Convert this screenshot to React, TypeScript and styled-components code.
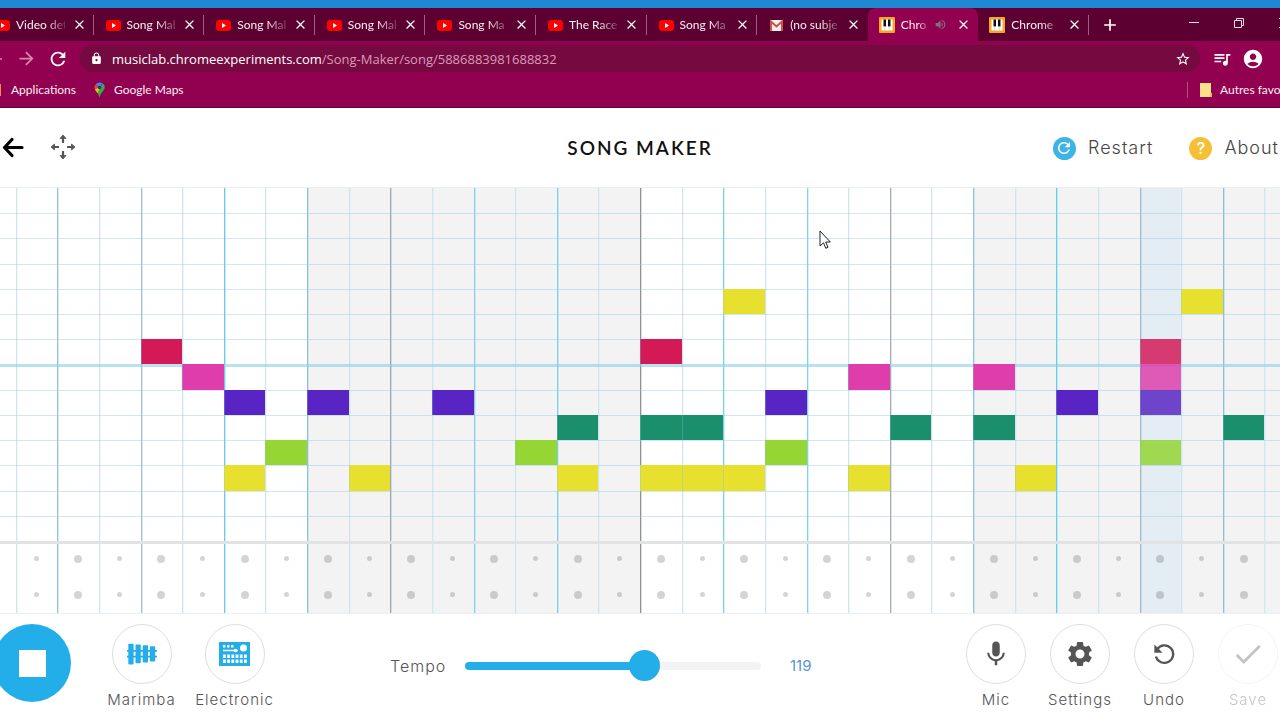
import React, { useState } from 'react';
import styled, { createGlobalStyle } from 'styled-components';
import {
  MdAccountCircle,
  MdAdd,
  MdArrowForward,
  MdCheck,
  MdClose,
  MdLock,
  MdMic,
  MdQueueMusic,
  MdRefresh,
  MdSettings,
  MdStarBorder,
  MdVolumeUp,
} from 'react-icons/md';

const uiFont = 'Lato, "Open Sans", sans-serif';
const urlFont = '"Open Sans", "Noto Sans", sans-serif';
const appFont = 'Inter, "Open Sans", sans-serif';
const accent = '#24aee9';

const GlobalStyle = createGlobalStyle`
  *, *::before, *::after { box-sizing: border-box; }
  body { margin: 0; background: #fff; overflow-x: hidden; }
  button { padding: 0; border: 0; background: none; font: inherit; color: inherit; cursor: pointer; }
  a { color: inherit; text-decoration: none; }
  svg { display: block; flex: none; }
`;

const Page = styled.div`
  position: relative;
  display: flex;
  flex-direction: column;
  min-height: 100vh;
  overflow: hidden;
`;

/* ---------- browser frame ---------- */

const Browser = styled.div`
  font-family: ${uiFont};
  color: #fbeff5;
  background: #920050;
  border-top: 8px solid #1f88d3;
  border-bottom: 1px solid #5d0636;
`;

const TabStrip = styled.div`
  display: flex;
  align-items: center;
  height: 33px;
  background: #5b0030;
`;

const Tabs = styled.div`
  display: flex;
  flex: 0 0 1106px;
  height: 33px;
  margin-left: -17px;
`;

const Tab = styled.div<{ $active?: boolean; $line?: boolean }>`
  position: relative;
  display: flex;
  flex: 1;
  align-items: center;
  gap: 6px;
  padding-left: 11px;
  font-size: 12px;
  line-height: 16px;
  border-radius: 8px 8px 0 0;
  background: ${(p) => (p.$active ? '#920050' : 'transparent')};
  &::after {
    content: '';
    position: absolute;
    right: 0;
    top: 7px;
    width: 1px;
    height: 20px;
    background: ${(p) => (p.$line ? '#9c6080' : 'transparent')};
  }
`;

const TabTitle = styled.span<{ $short?: boolean }>`
  width: ${(p) => (p.$short ? '27px' : '49px')};
  white-space: nowrap;
  mask-image: linear-gradient(to right, #000 60%, rgba(0, 0, 0, 0.2) 100%);
`;

const TabSound = styled.span`
  width: 16px;
  color: #84707a;
`;

const TabClose = styled.button`
  display: grid;
  place-items: center;
  width: 16px;
  height: 16px;
  color: #fff;
`;

const NewTab = styled.button`
  display: grid;
  place-items: center;
  width: 28px;
  height: 28px;
  margin-left: 7px;
  color: #fff;
`;

const WindowControls = styled.div`
  display: flex;
  align-items: center;
  gap: 33px;
  height: 28px;
  margin: 0 -10px 4px auto;
`;

const ControlButton = styled.button`
  display: grid;
  place-items: center;
  width: 12px;
  height: 12px;
`;

const Toolbar = styled.div`
  display: flex;
  align-items: center;
  height: 35px;
`;

const NavGroup = styled.div`
  display: flex;
  align-items: center;
  gap: 10px;
  width: 80px;
  margin-left: -14px;
  margin-right: 14px;
`;

const NavButton = styled.button<{ $dim?: boolean }>`
  color: ${(p) => (p.$dim ? '#d287ae' : '#fff')};
`;

const AddressBar = styled.div`
  display: flex;
  flex: 1;
  align-items: center;
  gap: 9px;
  height: 27px;
  padding: 0 9px 0 10px;
  border-radius: 14px;
  background: #740a40;
`;

const Address = styled.span`
  flex: 1;
  font-family: ${urlFont};
  font-size: 13px;
  line-height: 18px;
  color: #d99bbb;
  white-space: nowrap;
`;

const Host = styled.span`
  color: #fff;
`;

const ToolbarEnd = styled.div`
  display: flex;
  align-items: center;
  gap: 10px;
  margin: 0 16px 0 12px;
  color: #fff;
`;

const Bookmarks = styled.div`
  display: flex;
  align-items: center;
  height: 31px;
  padding-bottom: 4px;
  font-size: 12px;
  line-height: 16px;
`;

const AppsMark = styled.span`
  width: 1px;
  height: 12px;
  margin-right: 10px;
  background: #ef8a5a;
`;

const Bookmark = styled.a`
  display: flex;
  align-items: center;
  gap: 8px;
  margin-right: 17px;
  white-space: nowrap;
`;

const OtherBookmarks = styled.div`
  display: flex;
  width: 93px;
  margin-left: auto;
  padding-left: 12px;
  border-left: 1px solid #b0527f;
`;

/* ---------- song maker header ---------- */

const Header = styled.header`
  display: grid;
  grid-template-columns: 1fr auto 1fr;
  align-items: center;
  height: 80px;
  font-family: ${appFont};
  font-weight: 300;
  color: #444;
`;

const HeaderSide = styled.div<{ $end?: boolean }>`
  display: flex;
  align-items: center;
  gap: ${(p) => (p.$end ? '36px' : '26px')};
  justify-content: ${(p) => (p.$end ? 'flex-end' : 'flex-start')};
  padding: ${(p) => (p.$end ? '0 1px 0 0' : '0 0 0 2px')};
`;

const Title = styled.h1`
  margin: 0;
  font-family: Lato, sans-serif;
  font-size: 19px;
  line-height: 28px;
  font-weight: 600;
  letter-spacing: 2px;
  color: #111;
`;

const HeaderButton = styled.button`
  display: flex;
  align-items: center;
  gap: 12px;
  font-size: 18px;
  line-height: 24px;
  letter-spacing: 1px;
`;

const Disc = styled.span<{ $color: string }>`
  display: grid;
  place-items: center;
  width: 23px;
  height: 23px;
  border-radius: 50%;
  background: ${(p) => p.$color};
  color: #fff;
  font-size: 16px;
  line-height: 23px;
  font-weight: 500;
  letter-spacing: 0;
`;

/* ---------- sequencer ---------- */

const Sequencer = styled.main`
  display: grid;
  flex: 1;
  grid-template-columns: repeat(32, 1fr);
  grid-template-rows: repeat(14, minmax(20px, 1fr)) 36px 36px;
  margin: 0 -26px;
  box-shadow: 0 0 0 1px #ebeff1;
`;

const Column = styled.div<{ $shaded: boolean; $line: string; $playing: boolean }>`
  grid-row: 1 / -1;
  border-left: 1px solid ${(p) => p.$line};
  box-shadow: inset 1px 0 0 ${(p) => p.$line}55;
  background: ${(p) => (p.$playing ? '#e4edf4' : p.$shaded ? '#f3f3f3' : '#fff')};
`;

const RowLine = styled.div<{ $octave?: boolean }>`
  grid-column: 1 / -1;
  align-self: end;
  height: ${(p) => (p.$octave ? '3px' : '1px')};
  margin-bottom: ${(p) => (p.$octave ? '-3px' : '-1px')};
  background: ${(p) => (p.$octave ? 'rgba(140, 205, 235, 0.6)' : 'rgba(150, 205, 228, 0.45)')};
`;

const Divider = styled.div`
  grid-column: 1 / -1;
  grid-row: 15;
  height: 3px;
  background: #e1e2e3;
`;

const Note = styled.div<{ $color: string; $playing: boolean }>`
  border-left: 1px solid rgba(130, 200, 220, 0.35);
  background: ${(p) => p.$color};
  opacity: ${(p) => (p.$playing ? 0.84 : 1)};
`;

const Beat = styled.div<{ $strong: boolean }>`
  place-self: center;
  width: ${(p) => (p.$strong ? '8px' : '5px')};
  height: ${(p) => (p.$strong ? '8px' : '5px')};
  border-radius: 50%;
  background: rgba(0, 0, 0, 0.17);
`;

/* ---------- bottom controls ---------- */

const Footer = styled.footer`
  display: flex;
  align-items: flex-start;
  height: 107px;
  padding-top: 11px;
  font-family: ${appFont};
  font-weight: 300;
  color: #555;
`;

const StopButton = styled.button`
  display: grid;
  place-items: center;
  flex: none;
  width: 78px;
  height: 78px;
  margin: 0 24px 0 -7px;
  border-radius: 50%;
  background: ${accent};
`;

const StopSquare = styled.span`
  width: 27px;
  height: 27px;
  background: #fff;
`;

const ToolGroup = styled.div<{ $end?: boolean }>`
  display: flex;
  margin-right: ${(p) => (p.$end ? '-10px' : '0')};
`;

const Tool = styled.button<{ $wide?: boolean; $faded?: boolean }>`
  display: flex;
  flex-direction: column;
  align-items: center;
  gap: 6px;
  width: ${(p) => (p.$wide ? '93px' : '84px')};
  font-size: 15px;
  line-height: 20px;
  letter-spacing: 1px;
  opacity: ${(p) => (p.$faded ? 0.35 : 1)};
`;

const ToolCircle = styled.span`
  display: grid;
  place-items: center;
  width: 60px;
  height: 60px;
  border: 1px solid #dedee0;
  border-radius: 50%;
`;

const Tempo = styled.div`
  display: flex;
  flex: 1;
  align-items: center;
  height: 84px;
  padding: 0 144px 0 109px;
  font-size: 16px;
  line-height: 20px;
`;

const TempoLabel = styled.label`
  width: 75px;
  letter-spacing: 1px;
`;

const TempoSlider = styled.input`
  flex: 1;
  min-width: 60px;
  height: 32px;
  margin: 0;
  appearance: none;
  background: none;
  &::-webkit-slider-runnable-track {
    height: 8px;
    border-radius: 4px;
    background: linear-gradient(to right, ${accent} var(--fill), #f3f3f3 var(--fill));
  }
  &::-webkit-slider-thumb {
    appearance: none;
    width: 31px;
    height: 31px;
    margin-top: -12px;
    border-radius: 50%;
    background: ${accent};
  }
`;

const TempoValue = styled.output`
  width: 49px;
  padding-left: 29px;
  font-size: 15px;
  font-weight: 400;
  color: #5b93d8;
`;

const Pointer = styled.svg`
  position: absolute;
  left: 819px;
  top: 230px;
`;

/* ---------- icons ---------- */

const YouTubeIcon = () => (
  <svg width="16" height="16" viewBox="0 0 16 16">
    <rect x="1" y="3" width="15" height="11" rx="3" fill="#f00" />
    <path d="M7 6v5l4-2.500z" fill="#fff" />
  </svg>
);

const GmailIcon = () => (
  <svg width="16" height="16" viewBox="0 0 16 16">
    <rect x="2" y="3" width="13" height="11" rx="1" fill="#f3eded" />
    <path d="M3 14V4.500l5.500 5 5.500-5V14" fill="none" stroke="#c9534c" strokeWidth="2" />
  </svg>
);

const PianoIcon = () => (
  <svg width="16" height="16" viewBox="0 0 16 16">
    <rect width="16" height="16" rx="1" fill="#f5a623" />
    <rect x="2.500" y="2.500" width="11" height="11" fill="#fff" />
    <path d="M4.500 2.500h2.500v7h-2.500zM9 2.500h2.500v7H9z" fill="#111" />
    <path d="M5.800 9v4.500M10.200 9v4.500" stroke="#bbb" strokeWidth="0.600" />
  </svg>
);

const MapPinIcon = () => (
  <svg width="13" height="16" viewBox="0 0 13 16">
    <path d="M6.500 0.500A5 5 0 0 0 2.700 2.300L6.500 5.500l3-4.200A5 5 0 0 0 6.500.5z" fill="#4285f4" />
    <path d="M2.700 2.300A5 5 0 0 0 1.900 7.600L6.500 5.500z" fill="#ea4335" />
    <path d="M1.900 7.600c.6 1.200 1.700 2.300 2.600 3.700L9.500 5.500 6.500 5z" fill="#fbbc04" />
    <path d="M9.500 1.300a5 5 0 0 1 1.600 6.300C10 9.800 7.500 11.500 6.500 15.500c-.5-1.700-1-3-2-4.200z" fill="#34a853" />
    <circle cx="6.500" cy="5.500" r="1.800" fill="#1f3e86" />
  </svg>
);

const FolderIcon = () => (
  <svg width="12" height="14" viewBox="0 0 12 14">
    <path d="M0 0h11v9.500l1 1V14H0z" fill="#fbe08a" />
    <path d="M10 9.500l2 1V14h-2z" fill="#e8c24c" />
  </svg>
);

const BackIcon = () => (
  <svg width="22" height="22" viewBox="0 0 22 22" fill="none" stroke="#000" strokeWidth="3.200" strokeLinecap="round" strokeLinejoin="round">
    <path d="M20 10.500H3M10 2.500l-7.500 8 7.500 8" />
  </svg>
);

const MoveIcon = () => (
  <svg width="26" height="28" viewBox="0 0 26 28" stroke="#555" strokeWidth="2.200" fill="#555">
    <path d="M13 9V4M13 17v5M9 13H4M17 13h5" fill="none" />
    <path d="M13 1l3 3.500h-6zM13 25l3-3.500h-6zM1 13l3.500-3v6zM25 13l-3.500-3v6z" strokeWidth="0.800" strokeLinejoin="round" />
  </svg>
);

const MarimbaIcon = () => (
  <svg width="30" height="22" viewBox="0 0 30 22" fill={accent}>
    <path d="M0 7h30v1.800H0zM0 12.800h30v1.800H0z" />
    <rect x="1.300" y="0.800" width="5.300" height="20.600" rx="0.800" />
    <rect x="8.500" y="1.600" width="5.300" height="18.600" rx="0.800" />
    <rect x="15.700" y="2.300" width="5.300" height="17.200" rx="0.800" />
    <rect x="22.900" y="3.200" width="5.300" height="15.400" rx="0.800" />
  </svg>
);

const ElectronicIcon = () => (
  <svg width="32" height="24" viewBox="0 0 32 24">
    <rect width="31" height="24" rx="0.500" fill={accent} />
    <g fill="#fff">
      <path d="M4 3h2.400v2.400H4zM8 3h2.400v2.400H8zM12 3h2.400v2.400H12zM4 7.800h15v1.400H4z" />
      <circle cx="16.500" cy="8.500" r="1.800" />
      <circle cx="24.500" cy="6" r="3.500" />
      {[4, 8.200, 12.400, 16.600, 20.800, 25].map((x) => (
        <path key={x} d={`M${x} 12.500h2.800v3.400h-2.800zM${x} 17.500h2.800v3.400h-2.800z`} />
      ))}
    </g>
  </svg>
);

const UndoIcon = () => (
  <svg width="24" height="24" viewBox="0 0 24 24">
    <path d="M5.200 7A8.800 8.800 0 1 1 3.900 14.500" fill="none" stroke="#555" strokeWidth="2.300" />
    <path d="M2.400 2.600v8.200h8.200z" fill="#555" />
  </svg>
);

/* ---------- data ---------- */

const tabs = [
  { title: 'Video det', icon: <YouTubeIcon /> },
  { title: 'Song Mal', icon: <YouTubeIcon /> },
  { title: 'Song Mal', icon: <YouTubeIcon /> },
  { title: 'Song Mal', icon: <YouTubeIcon /> },
  { title: 'Song Ma', icon: <YouTubeIcon /> },
  { title: 'The Race', icon: <YouTubeIcon /> },
  { title: 'Song Ma', icon: <YouTubeIcon /> },
  { title: '(no subje', icon: <GmailIcon /> },
  { title: 'Chro', icon: <PianoIcon />, active: true },
  { title: 'Chrome', icon: <PianoIcon /> },
];

const playColumn = 28;

const beatLines = [
  '#8fc5dc', '#8fc5dc', '#9dc1d2', '#66cbe8', '#8ac4dc', '#9aa8b2', '#84d2ea', '#7ccfec',
  '#909396', '#7bd3ee', '#7fd3ee', '#a4adb2', '#8cc6e0', '#62d0ec', '#a3b9c8', '#8bbfda',
];

const rowColors: Record<number, string> = {
  4: '#e8e02e',
  6: '#d31a57',
  7: '#df3dac',
  8: '#5824c4',
  9: '#1b8e6c',
  10: '#95d534',
  11: '#e8e02e',
};

const melody: Record<number, number[]> = {
  4: [18, 29],
  6: [4, 16, 28],
  7: [5, 21, 24, 28],
  8: [6, 8, 11, 19, 26, 28],
  9: [14, 16, 17, 22, 24, 30],
  10: [7, 13, 19, 28],
  11: [6, 9, 14, 16, 17, 18, 21, 25],
};

const columns = Array.from({ length: 32 }, (_, i) => i);
const rows = Array.from({ length: 13 }, (_, i) => i);

export default function App() {
  const [tempo, setTempo] = useState(119);
  const fill = `${((tempo - 20) / 160) * 100}%`;

  return (
    <Page>
      <GlobalStyle />
      <Browser>
        <TabStrip>
          <Tabs>
            {tabs.map((tab, i) => (
              <Tab key={i} $active={tab.active} $line={i !== 7 && i !== 8}>
                {tab.icon}
                <TabTitle $short={tab.active}>{tab.title}</TabTitle>
                {tab.active && (
                  <TabSound>
                    <MdVolumeUp size={13} />
                  </TabSound>
                )}
                <TabClose aria-label="Close tab">
                  <MdClose size={15} />
                </TabClose>
              </Tab>
            ))}
          </Tabs>
          <NewTab aria-label="New tab">
            <MdAdd size={20} />
          </NewTab>
          <WindowControls>
            <ControlButton aria-label="Minimize">
              <svg width="12" height="12" viewBox="0 0 12 12">
                <path d="M1 5.500h10" stroke="#f0dce6" />
              </svg>
            </ControlButton>
            <ControlButton aria-label="Restore">
              <svg width="12" height="12" viewBox="0 0 12 12" fill="none" stroke="#f0dce6">
                <path d="M1.500 3.500h7v7h-7zM3.500 3.500v-2h7v7h-2" />
              </svg>
            </ControlButton>
            <ControlButton aria-label="Close">
              <svg width="12" height="12" viewBox="0 0 12 12" stroke="#f0dce6">
                <path d="M1 1l10 10M11 1L1 11" />
              </svg>
            </ControlButton>
          </WindowControls>
        </TabStrip>
        <Toolbar>
          <NavGroup>
            <NavButton $dim aria-label="Back">
              <svg width="20" height="20" viewBox="0 0 20 20">
                <path d="M4 10h12" stroke="currentColor" strokeWidth="1.500" />
              </svg>
            </NavButton>
            <NavButton $dim aria-label="Forward">
              <MdArrowForward size={21} />
            </NavButton>
            <NavButton aria-label="Reload">
              <MdRefresh size={22} />
            </NavButton>
          </NavGroup>
          <AddressBar>
            <MdLock size={13} color="#fff" />
            <Address>
              <Host>musiclab.chromeexperiments.com</Host>/Song-Maker/song/5886883981688832
            </Address>
            <NavButton aria-label="Bookmark this page">
              <MdStarBorder size={16} />
            </NavButton>
          </AddressBar>
          <ToolbarEnd>
            <MdQueueMusic size={20} />
            <MdAccountCircle size={22} />
          </ToolbarEnd>
        </Toolbar>
        <Bookmarks>
          <AppsMark />
          <Bookmark href="#apps">Applications</Bookmark>
          <Bookmark href="#maps">
            <MapPinIcon />
            Google Maps
          </Bookmark>
          <OtherBookmarks>
            <Bookmark href="#others">
              <FolderIcon />
              Autres favo
            </Bookmark>
          </OtherBookmarks>
        </Bookmarks>
      </Browser>

      <Header>
        <HeaderSide>
          <button aria-label="Back">
            <BackIcon />
          </button>
          <button aria-label="Move">
            <MoveIcon />
          </button>
        </HeaderSide>
        <Title>SONG MAKER</Title>
        <HeaderSide $end>
          <HeaderButton>
            <Disc $color="#3db3e6">
              <MdRefresh size={18} />
            </Disc>
            Restart
          </HeaderButton>
          <HeaderButton>
            <Disc $color="#f5c038">?</Disc>
            About
          </HeaderButton>
        </HeaderSide>
      </Header>

      <Sequencer>
        {columns.map((c) => (
          <Column
            key={c}
            style={{ gridColumn: c + 1 }}
            $shaded={Math.floor(c / 8) % 2 === 1}
            $playing={c === playColumn}
            $line={c % 2 === 0 ? beatLines[c / 2] : '#cfe6f1'}
          />
        ))}
        {rows.map((r) => (
          <RowLine key={r} $octave={r === 6} style={{ gridRow: r + 1 }} />
        ))}
        <Divider />
        {Object.entries(melody).flatMap(([row, cols]) =>
          cols.map((c) => (
            <Note
              key={`${row}-${c}`}
              $color={rowColors[Number(row)]}
              $playing={c === playColumn}
              style={{ gridRow: Number(row) + 1, gridColumn: c + 1 }}
            />
          )),
        )}
        {[15, 16].flatMap((r) =>
          columns.map((c) => (
            <Beat key={`${r}-${c}`} $strong={c % 2 === 0} style={{ gridRow: r, gridColumn: c + 1 }} />
          )),
        )}
      </Sequencer>

      <Footer>
        <StopButton aria-label="Stop">
          <StopSquare />
        </StopButton>
        <ToolGroup>
          <Tool $wide>
            <ToolCircle>
              <MarimbaIcon />
            </ToolCircle>
            Marimba
          </Tool>
          <Tool $wide>
            <ToolCircle>
              <ElectronicIcon />
            </ToolCircle>
            Electronic
          </Tool>
        </ToolGroup>
        <Tempo>
          <TempoLabel htmlFor="tempo">Tempo</TempoLabel>
          <TempoSlider
            id="tempo"
            type="range"
            min={20}
            max={180}
            value={tempo}
            onChange={(e) => setTempo(Number(e.target.value))}
            style={{ '--fill': fill } as React.CSSProperties}
          />
          <TempoValue htmlFor="tempo">{tempo}</TempoValue>
        </Tempo>
        <ToolGroup $end>
          <Tool>
            <ToolCircle>
              <MdMic size={30} />
            </ToolCircle>
            Mic
          </Tool>
          <Tool>
            <ToolCircle>
              <MdSettings size={30} />
            </ToolCircle>
            Settings
          </Tool>
          <Tool>
            <ToolCircle>
              <UndoIcon />
            </ToolCircle>
            Undo
          </Tool>
          <Tool $faded>
            <ToolCircle>
              <MdCheck size={34} />
            </ToolCircle>
            Save
          </Tool>
        </ToolGroup>
      </Footer>

      <Pointer width="12" height="20" viewBox="0 0 12 20">
        <path d="M1 1v15l3.500-3.200 2.300 5.500 2.200-1-2.300-5.300h4.600z" fill="#fff" stroke="#222" />
      </Pointer>
    </Page>
  );
}
